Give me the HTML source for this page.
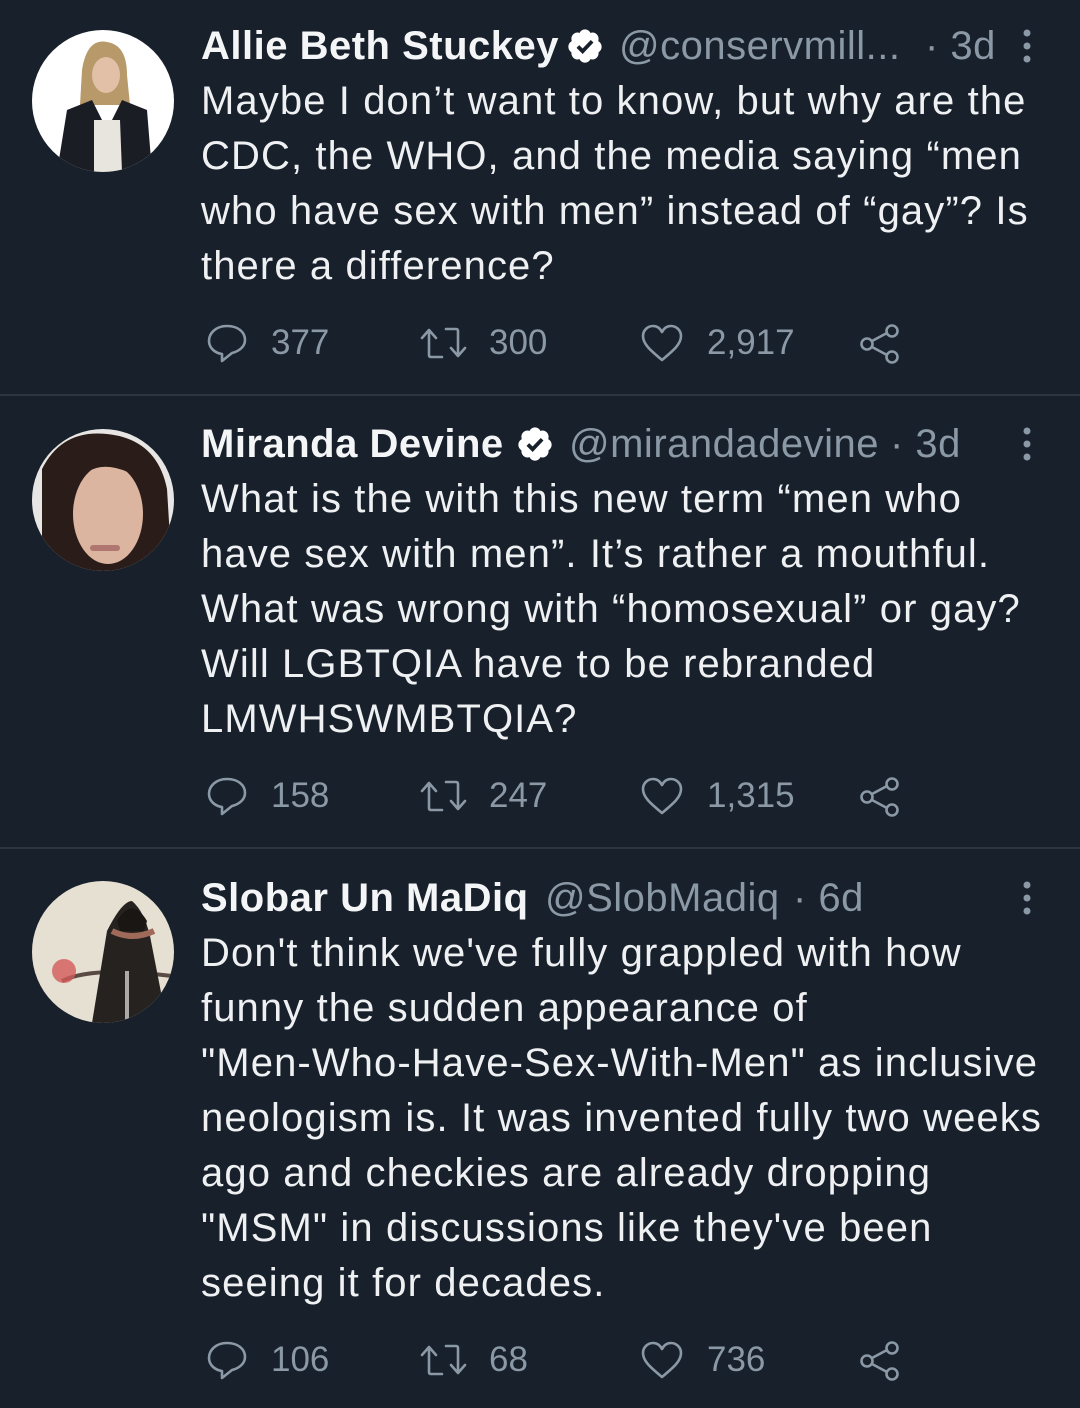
<!DOCTYPE html>
<html><head><meta charset="utf-8"><style>
html,body{margin:0;padding:0;background:#17202b;}
body{width:1080px;height:1408px;position:relative;overflow:hidden;font-family:"Liberation Sans",Arial,sans-serif;}
.a{position:absolute;white-space:nowrap;}
.t{color:#eef0f2;font-size:40px;letter-spacing:1.1px;line-height:55px;left:201px;}
.n{color:#f4f5f6;font-size:40px;font-weight:bold;line-height:50px;left:201px;letter-spacing:0.5px;}
.h{color:#8b98a5;font-size:40px;line-height:50px;letter-spacing:0.5px;}
.c{color:#8b98a5;font-size:35px;line-height:40px;letter-spacing:0;}
.div{position:absolute;left:0;width:1080px;height:2px;background:#2c3640;}
svg.i{position:absolute;}
</style></head><body>

<svg class="i" style="left:32px;top:30px" width="142" height="142" viewBox="0 0 142 142">
<defs><clipPath id="c1"><circle cx="71" cy="71" r="71"/></clipPath></defs>
<g clip-path="url(#c1)"><rect width="142" height="142" fill="#fff"/>
<path d="M50 40 Q55 8 75 12 Q95 15 95 45 L98 75 L48 75Z" fill="#b89a6a"/>
<ellipse cx="74" cy="45" rx="14" ry="18" fill="#e2c0a8"/>
<path d="M25 142 L35 80 L60 70 L75 100 L90 70 L115 80 L120 142Z" fill="#1b1d24"/>
<path d="M62 90 L88 90 L90 142 L62 142Z" fill="#e8e4de"/></g></svg>

<svg class="i" style="left:32px;top:429px" width="142" height="142" viewBox="0 0 142 142">
<defs><clipPath id="c2"><circle cx="71" cy="71" r="71"/></clipPath></defs>
<g clip-path="url(#c2)"><rect width="142" height="142" fill="#e8e6e4"/>
<path d="M10 142 L10 40 Q30 0 75 5 Q125 10 135 60 L140 142Z" fill="#2a1c18"/>
<ellipse cx="76" cy="85" rx="35" ry="50" fill="#dcb5a0"/>
<path d="M40 60 Q60 25 100 45 L105 30 Q75 5 45 30Z" fill="#2a1c18"/>
<rect x="58" y="116" width="30" height="6" rx="3" fill="#b07670"/></g></svg>

<svg class="i" style="left:32px;top:881px" width="142" height="142" viewBox="0 0 142 142">
<defs><clipPath id="c3"><circle cx="71" cy="71" r="71"/></clipPath></defs>
<g clip-path="url(#c3)"><rect width="142" height="142" fill="#e6e0d2"/>
<path d="M30 100 Q60 85 140 95" stroke="#5a4a44" stroke-width="4" fill="none"/>
<circle cx="32" cy="90" r="12" fill="#d25a5a" opacity=".8"/>
<path d="M60 142 L75 50 Q90 20 100 20 Q112 30 118 55 L135 142Z" fill="#26221f"/>
<path d="M85 40 Q100 15 115 40 L112 50 L88 50Z" fill="#1a1614"/>
<rect x="93" y="90" width="4" height="52" fill="#aaa"/>
<path d="M80 50 Q100 60 122 50" stroke="#a06a5a" stroke-width="6" fill="none"/></g></svg>

<div class="a n" style="top:21px">Allie Beth Stuckey</div>
<svg class="i" style="left:566px;top:27px" width="38" height="38" viewBox="0 0 24 24"><path fill="#fff" d="M22.5 12.5c0-1.58-.875-2.95-2.148-3.6.154-.435.238-.905.238-1.4 0-2.21-1.710-3.998-3.818-3.998-.47 0-.92.084-1.336.25C14.818 2.415 13.51 1.5 12 1.5s-2.816.917-3.437 2.25c-.415-.165-.866-.25-1.336-.25-2.11 0-3.818 1.79-3.818 4 0 .494.083.964.237 1.4-1.272.65-2.147 2.018-2.147 3.6 0 1.495.782 2.798 1.942 3.486-.02.17-.032.34-.032.514 0 2.21 1.708 4 3.818 4 .47 0 .92-.086 1.335-.25.62 1.334 1.926 2.25 3.437 2.25 1.512 0 2.818-.916 3.437-2.25.415.163.865.248 1.336.248 2.11 0 3.818-1.79 3.818-4 0-.174-.012-.344-.033-.513 1.158-.687 1.943-1.99 1.943-3.484z"/><path d="M7.5 12.3l3 3 6-6.3" stroke="#17202b" stroke-width="2.4" fill="none"/></svg>
<div class="a h" style="left:619px;top:21px">@conservmill...</div>
<div class="a h" style="left:925px;top:21px">· 3d</div>
<svg class="i" style="left:1020px;top:28px" width="14" height="36"><circle cx="7" cy="5" r="3.5" fill="#8b98a5"/><circle cx="7" cy="18" r="3.5" fill="#8b98a5"/><circle cx="7" cy="31" r="3.5" fill="#8b98a5"/></svg>
<div class="a t" style="top:74px">Maybe I don’t want to know, but why are the</div>
<div class="a t" style="top:129px">CDC, the WHO, and the media saying “men</div>
<div class="a t" style="top:184px">who have sex with men” instead of “gay”? Is</div>
<div class="a t" style="top:239px">there a difference?</div>

<div class="a n" style="top:419px">Miranda Devine</div>
<svg class="i" style="left:516px;top:425px" width="38" height="38" viewBox="0 0 24 24"><path fill="#fff" d="M22.5 12.5c0-1.58-.875-2.95-2.148-3.6.154-.435.238-.905.238-1.4 0-2.21-1.71-3.998-3.818-3.998-.47 0-.92.084-1.336.25C14.818 2.415 13.51 1.5 12 1.5s-2.816.917-3.437 2.25c-.415-.165-.866-.25-1.336-.25-2.11 0-3.818 1.79-3.818 4 0 .494.083.964.237 1.4-1.272.65-2.147 2.018-2.147 3.6 0 1.495.782 2.798 1.942 3.486-.02.17-.032.34-.032.514 0 2.21 1.708 4 3.818 4 .47 0 .92-.086 1.335-.25.62 1.334 1.926 2.25 3.437 2.25 1.512 0 2.818-.916 3.437-2.250.415.163.865.248 1.336.248 2.11 0 3.818-1.79 3.818-4 0-.174-.012-.344-.033-.513 1.158-.687 1.943-1.99 1.943-3.484z"/><path d="M7.5 12.3l3 3 6-6.3" stroke="#17202b" stroke-width="2.4" fill="none"/></svg>
<div class="a h" style="left:569px;top:419px">@mirandadevine</div>
<div class="a h" style="left:890px;top:419px">· 3d</div>
<svg class="i" style="left:1020px;top:426px" width="14" height="36"><circle cx="7" cy="5" r="3.5" fill="#8b98a5"/><circle cx="7" cy="18" r="3.5" fill="#8b98a5"/><circle cx="7" cy="31" r="3.5" fill="#8b98a5"/></svg>
<div class="a t" style="top:472px">What is the with this new term “men who</div>
<div class="a t" style="top:527px">have sex with men”. It’s rather a mouthful.</div>
<div class="a t" style="top:582px">What was wrong with “homosexual” or gay?</div>
<div class="a t" style="top:637px">Will LGBTQIA have to be rebranded</div>
<div class="a t" style="top:692px">LMWHSWMBTQIA?</div>

<div class="a n" style="top:873px">Slobar Un MaDiq</div>
<div class="a h" style="left:545px;top:873px">@SlobMadiq</div>
<div class="a h" style="left:793px;top:873px">· 6d</div>
<svg class="i" style="left:1020px;top:880px" width="14" height="36"><circle cx="7" cy="5" r="3.5" fill="#8b98a5"/><circle cx="7" cy="18" r="3.5" fill="#8b98a5"/><circle cx="7" cy="31" r="3.5" fill="#8b98a5"/></svg>
<div class="a t" style="top:926px">Don't think we've fully grappled with how</div>
<div class="a t" style="top:981px">funny the sudden appearance of</div>
<div class="a t" style="top:1036px">"Men-Who-Have-Sex-With-Men" as inclusive</div>
<div class="a t" style="top:1091px">neologism is. It was invented fully two weeks</div>
<div class="a t" style="top:1146px">ago and checkies are already dropping</div>
<div class="a t" style="top:1201px">"MSM" in discussions like they've been</div>
<div class="a t" style="top:1256px">seeing it for decades.</div>

<div class="div" style="top:394px"></div>
<div class="div" style="top:847px"></div>

<svg class="i" style="left:205px;top:323px" width="44" height="42" viewBox="0 0 44 42"><path d="M22 3 C11 3 4 10 4 18 C4 25 10 30 17 31 L17 38 L27 30 C35 28 40 23 40 17 C40 9 33 3 22 3Z" fill="none" stroke="#8b98a5" stroke-width="2.6" stroke-linejoin="round"/></svg>
<div class="a c" style="left:271px;top:323px">377</div>
<svg class="i" style="left:420px;top:323px" width="48" height="40" viewBox="0 0 48 40"><path d="M9 32 V8 M2 15 L9 7 L16 15 M9 32 Q9 34 11 34 H22 M26 6 H36 Q38 6 38 8 V32 M31 25 L38 33 L45 25" fill="none" stroke="#8b98a5" stroke-width="2.6" stroke-linejoin="round" stroke-linecap="round"/></svg>
<div class="a c" style="left:489px;top:323px">300</div>
<svg class="i" style="left:640px;top:323px" width="44" height="40" viewBox="0 0 44 40"><path d="M22 37 C10 27 3 21 3 13 C3 7 8 3 13 3 C17 3 20 5 22 9 C24 5 27 3 31 3 C36 3 41 7 41 13 C41 21 34 27 22 37Z" fill="none" stroke="#8b98a5" stroke-width="2.6" stroke-linejoin="round"/></svg>
<div class="a c" style="left:707px;top:323px">2,917</div>
<svg class="i" style="left:858px;top:322px" width="44" height="42" viewBox="0 0 44 42"><circle cx="34" cy="9" r="5.5" fill="none" stroke="#8b98a5" stroke-width="2.6"/><circle cx="9" cy="22" r="5.5" fill="none" stroke="#8b98a5" stroke-width="2.6"/><circle cx="34" cy="35" r="5.5" fill="none" stroke="#8b98a5" stroke-width="2.6"/><path d="M14 19 L29 11 M14 25 L29 33" stroke="#8b98a5" stroke-width="2.6"/></svg>

<svg class="i" style="left:205px;top:776px" width="44" height="42" viewBox="0 0 44 42"><path d="M22 3 C11 3 4 10 4 18 C4 25 10 30 17 31 L17 38 L27 30 C35 28 40 23 40 17 C40 9 33 3 22 3Z" fill="none" stroke="#8b98a5" stroke-width="2.6" stroke-linejoin="round"/></svg>
<div class="a c" style="left:271px;top:776px">158</div>
<svg class="i" style="left:420px;top:776px" width="48" height="40" viewBox="0 0 48 40"><path d="M9 32 V8 M2 15 L9 7 L16 15 M9 32 Q9 34 11 34 H22 M26 6 H36 Q38 6 38 8 V32 M31 25 L38 33 L45 25" fill="none" stroke="#8b98a5" stroke-width="2.6" stroke-linejoin="round" stroke-linecap="round"/></svg>
<div class="a c" style="left:489px;top:776px">247</div>
<svg class="i" style="left:640px;top:776px" width="44" height="40" viewBox="0 0 44 40"><path d="M22 37 C10 27 3 21 3 13 C3 7 8 3 13 3 C17 3 20 5 22 9 C24 5 27 3 31 3 C36 3 41 7 41 13 C41 21 34 27 22 37Z" fill="none" stroke="#8b98a5" stroke-width="2.6" stroke-linejoin="round"/></svg>
<div class="a c" style="left:707px;top:776px">1,315</div>
<svg class="i" style="left:858px;top:775px" width="44" height="42" viewBox="0 0 44 42"><circle cx="34" cy="9" r="5.5" fill="none" stroke="#8b98a5" stroke-width="2.6"/><circle cx="9" cy="22" r="5.5" fill="none" stroke="#8b98a5" stroke-width="2.6"/><circle cx="34" cy="35" r="5.5" fill="none" stroke="#8b98a5" stroke-width="2.6"/><path d="M14 19 L29 11 M14 25 L29 33" stroke="#8b98a5" stroke-width="2.6"/></svg>

<svg class="i" style="left:205px;top:1340px" width="44" height="42" viewBox="0 0 44 42"><path d="M22 3 C11 3 4 10 4 18 C4 25 10 30 17 31 L17 38 L27 30 C35 28 40 23 40 17 C40 9 33 3 22 3Z" fill="none" stroke="#8b98a5" stroke-width="2.6" stroke-linejoin="round"/></svg>
<div class="a c" style="left:271px;top:1340px">106</div>
<svg class="i" style="left:420px;top:1340px" width="48" height="40" viewBox="0 0 48 40"><path d="M9 32 V8 M2 15 L9 7 L16 15 M9 32 Q9 34 11 34 H22 M26 6 H36 Q38 6 38 8 V32 M31 25 L38 33 L45 25" fill="none" stroke="#8b98a5" stroke-width="2.6" stroke-linejoin="round" stroke-linecap="round"/></svg>
<div class="a c" style="left:489px;top:1340px">68</div>
<svg class="i" style="left:640px;top:1340px" width="44" height="40" viewBox="0 0 44 40"><path d="M22 37 C10 27 3 21 3 13 C3 7 8 3 13 3 C17 3 20 5 22 9 C24 5 27 3 31 3 C36 3 41 7 41 13 C41 21 34 27 22 37Z" fill="none" stroke="#8b98a5" stroke-width="2.6" stroke-linejoin="round"/></svg>
<div class="a c" style="left:707px;top:1340px">736</div>
<svg class="i" style="left:858px;top:1339px" width="44" height="42" viewBox="0 0 44 42"><circle cx="34" cy="9" r="5.5" fill="none" stroke="#8b98a5" stroke-width="2.6"/><circle cx="9" cy="22" r="5.5" fill="none" stroke="#8b98a5" stroke-width="2.6"/><circle cx="34" cy="35" r="5.5" fill="none" stroke="#8b98a5" stroke-width="2.6"/><path d="M14 19 L29 11 M14 25 L29 33" stroke="#8b98a5" stroke-width="2.6"/></svg>

</body>
</html>
